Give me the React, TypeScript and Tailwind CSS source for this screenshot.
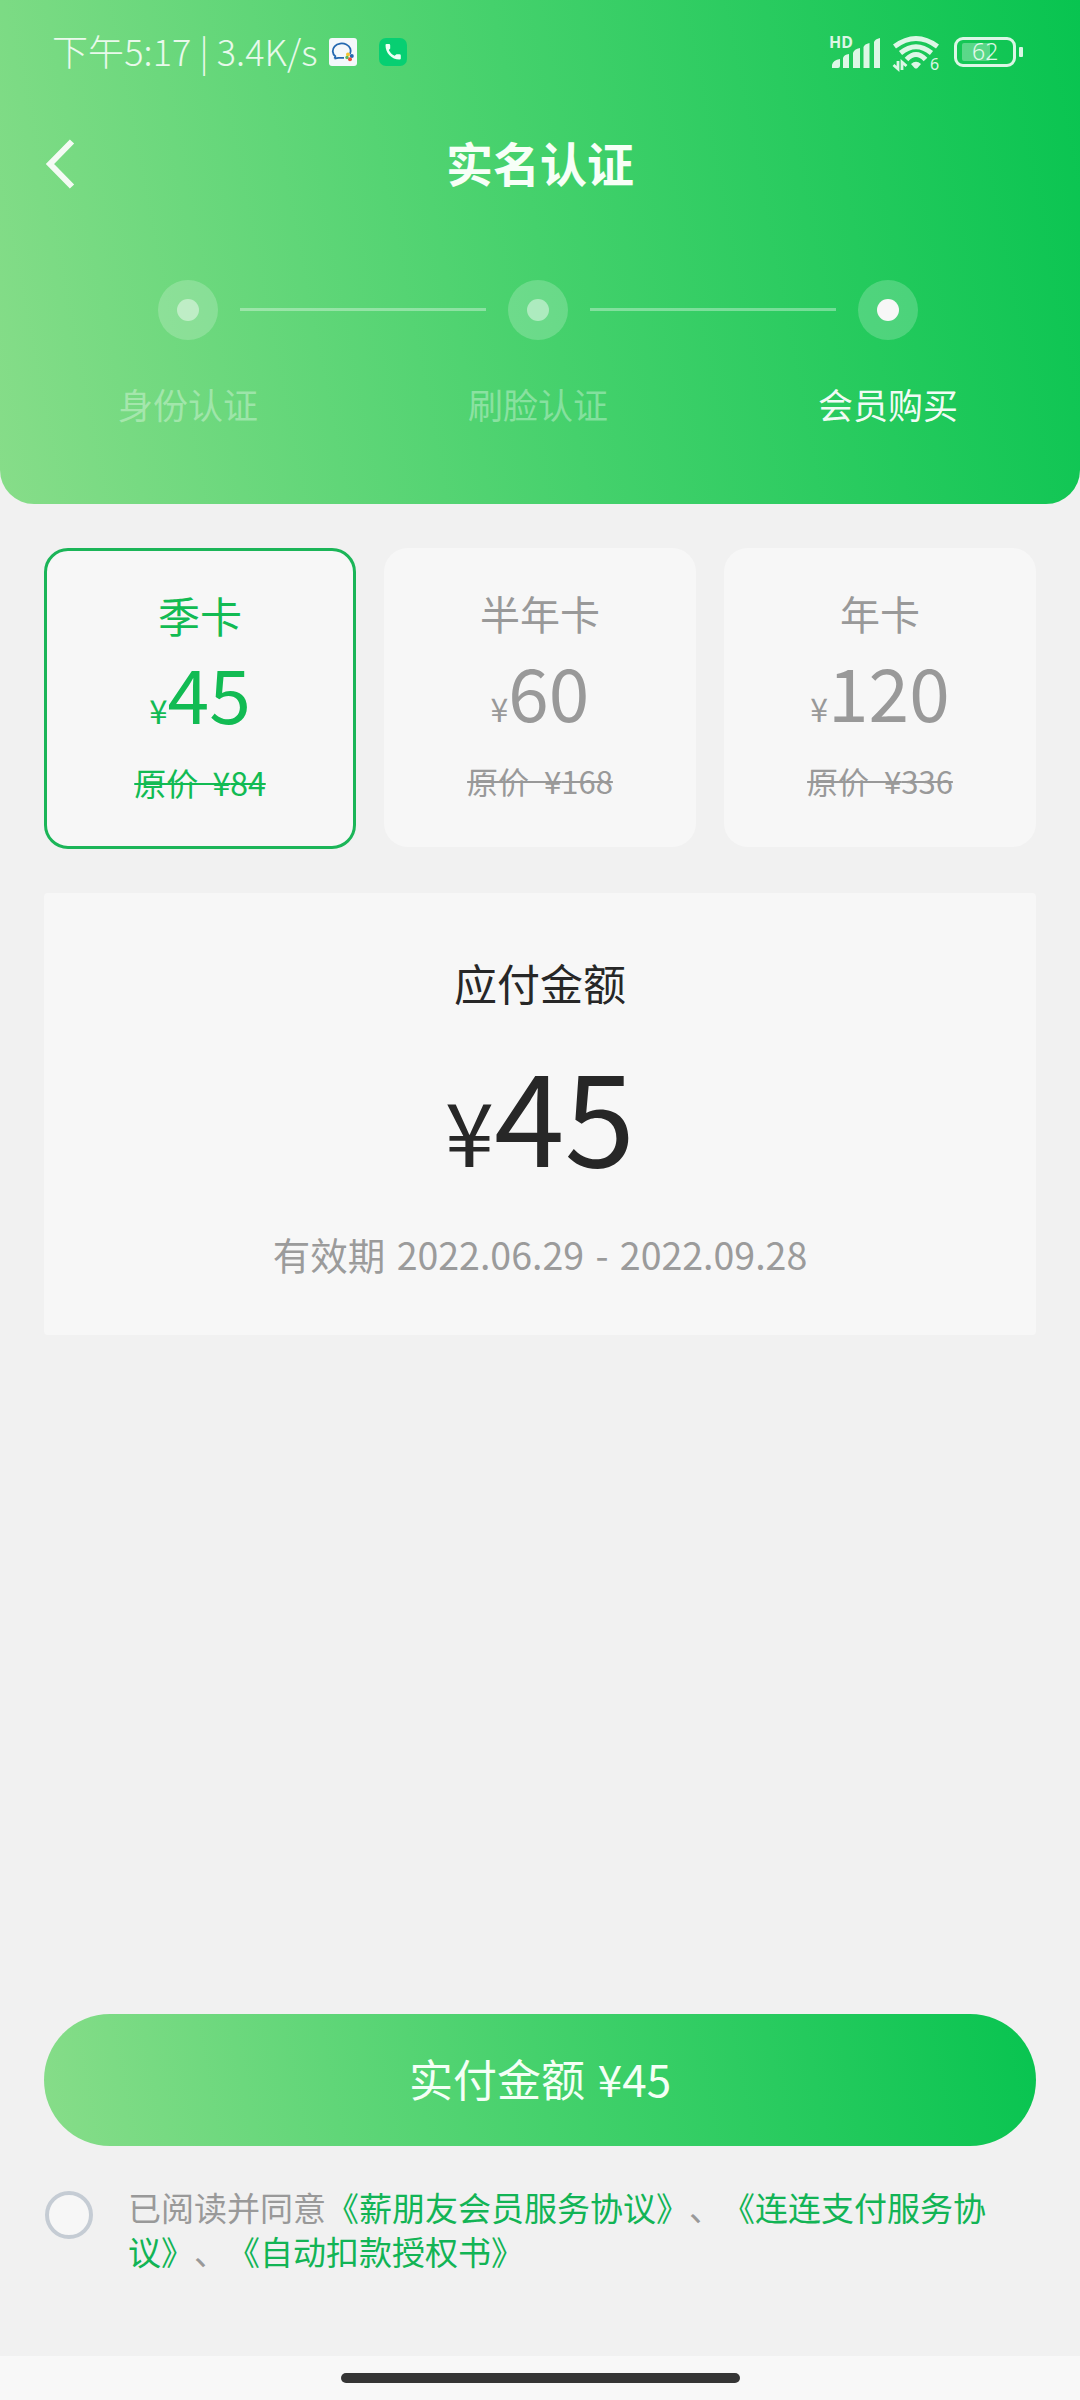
import React from "react";

const plans = [
  { name: "季卡", price: "45", original: "84", selected: true },
  { name: "半年卡", price: "60", original: "168", selected: false },
  { name: "年卡", price: "120", original: "336", selected: false },
];

const steps = [
  { label: "身份认证", active: false },
  { label: "刷脸认证", active: false },
  { label: "会员购买", active: true },
];

function StatusBar() {
  return (
    <div className="flex h-[104px] items-center pl-[52px] pr-[57px] text-white/85">
      <span className="-mt-[5px] w-[277px] whitespace-nowrap text-[36px] font-light leading-none tracking-[0.1px]">下午5:17 | 3.4K/s</span>
      <svg className="h-7 w-7" viewBox="0 0 28 28">
        <rect width="28" height="28" rx="3" fill="#f4f8fb" />
        <path d="M5.500 20.500L6.300 18.300A9 7.600 0 1 1 21 16M5.500 20.500L9.500 19.800H15" fill="none" stroke="#2468b0" strokeWidth="1.800" />
        <circle cx="19" cy="16.500" r="2" fill="#f5c332" />
        <circle cx="22.800" cy="18" r="2" fill="#2468b0" />
        <circle cx="18" cy="19.500" r="1.700" fill="#5cb85c" />
        <circle cx="21" cy="21.300" r="2" fill="#e8503a" />
      </svg>
      <svg className="ml-[22px] h-7 w-7" viewBox="0 0 28 28">
        <rect width="28" height="28" rx="7" fill="#07cf72" />
        <path d="M6.500 7Q6.500 6 7.500 6H10Q11.200 6 11.200 7.200V10.500L9.800 12C11 14.600 13 16.600 15.600 17.800L17.500 16.200H20.500Q21.800 16.200 21.800 17.500V20.500Q21.800 21.600 20.500 21.600C12.500 21.600 6.500 15 6.500 7Z" fill="#effff6" />
      </svg>
      <div className="grow" />
      <svg className="h-[40px] w-[52px] overflow-visible" viewBox="0 0 52 40" fill="#ffffff" fillOpacity="0.85">
        <text x="1" y="16" fontSize="16" fontWeight="700" fontFamily="Noto Sans">HD</text>
        <path d="M4 36V33Q5 28 12 27V34Q12 36 10 36ZM15 36V26Q16 22.500 21 22V36ZM25 36V21Q26 17 32 16V36ZM35.500 36V15Q36.500 12 41.500 11V36ZM46 36V10Q47 7 52 6V36Z" />
      </svg>
      <svg className="ml-3 h-[40px] w-[48px] overflow-visible" viewBox="0 0 48 40" fill="none" stroke="#ffffff" strokeOpacity="0.85" strokeWidth="5">
        <path d="M2.500 14.500Q24 -1.500 45.500 14.500M8.500 21Q24 8.500 39.500 21M14.500 27.500Q24 17.500 33.500 27.500" />
        <path d="M19 32Q24 27.500 29 32L25.500 36Q24 37 22.500 36Z" fill="#ffffff" fillOpacity="0.85" stroke="none" />
        <path d="M6 29V37L1.500 33M10 38V30L14.500 34" strokeWidth="2.800" />
        <text x="38" y="38" fontSize="16" fontFamily="Noto Sans" fill="#ffffff" fillOpacity="0.85" stroke="none">6</text>
      </svg>
      <div className="ml-[14px] flex h-[30px] w-[62px] items-center rounded-[9px] border-[3px] border-white/85 pl-[5px]">
        <div className="h-[18px] w-[28px] shrink-0 rounded-[2px] bg-white/30" />
        <span className="-ml-[18px] -mt-px font-['Noto_Sans'] text-[23px] font-light leading-none">62</span>
      </div>
      <div className="ml-[3px] h-[10px] w-[4px] rounded-[1px] bg-white/85" />
    </div>
  );
}

function Steps() {
  return (
    <div className="mt-[56px] flex px-[13px]">
      {steps.map((s, i) => (
        <div key={s.label} className="flex w-[350px] flex-col items-center">
          <div className="relative flex h-[60px] w-[60px] items-center justify-center rounded-full bg-white/20">
            <div className={s.active ? "h-[22px] w-[22px] rounded-full bg-[#f7f7f7]" : "h-[22px] w-[22px] rounded-full bg-white/45"} />
            {i < 2 && <div className="absolute left-[82px] top-[28px] h-[3px] w-[246px] bg-white/35" />}
          </div>
          <span className={s.active ? "mt-[46px] text-[35px] leading-[36px] text-white/95" : "mt-[46px] text-[35px] leading-[36px] text-white/35"}>{s.label}</span>
        </div>
      ))}
    </div>
  );
}

export default function App() {
  return (
    <div className="flex h-[2400px] w-[1080px] flex-col overflow-hidden bg-[#f1f1f1] font-['Noto_Sans_CJK_SC',sans-serif]">
      <header className="h-[504px] shrink-0 rounded-b-[34px] bg-[linear-gradient(79deg,#87dd89_0%,#45d16c_50%,#08c450_100%)]">
        <StatusBar />
        <div className="flex h-[120px] items-center justify-center">
          <svg className="ml-[44px] h-[52px] w-[34px]" viewBox="0 0 34 52" fill="none" stroke="#f4fbf4" strokeWidth="6">
            <path d="M28 3.500L6 26L28 48.500" />
          </svg>
          <h1 className="-mt-[6px] mr-[78px] grow text-center text-[47px] font-bold leading-none text-[#f7fff7]">实名认证</h1>
        </div>
        <Steps />
      </header>

      <section className="mt-[44px] flex gap-7 px-11">
        {plans.map((p) => (
          <div
            key={p.name}
            className={
              p.selected
                ? "flex h-[301px] w-[312px] flex-col items-center rounded-[24px] border-[3px] border-[#1bb558] bg-[#f7f7f7] pt-[43px] text-[#12bb53]"
                : "flex h-[299px] w-[312px] flex-col items-center rounded-[24px] bg-[#f7f7f7] pt-[44px] text-[#999999]"
            }
          >
            <span className={p.selected ? "text-[42px] leading-[42px]" : "text-[40px] leading-[42px]"}>{p.name}</span>
            <div className="mt-[20px] flex h-[72px] items-baseline leading-[72px]">
              <span className={p.selected ? "text-[33px]" : "text-[32px]"}>¥</span>
              <span className={p.selected ? "text-[75px]" : "text-[73px]"}>{p.price}</span>
            </div>
            <span className={p.selected ? "mt-[36px] text-[32px] leading-[36px] line-through decoration-[2px] [word-spacing:7px]" : "mt-[37px] text-[31px] leading-[36px] line-through decoration-[2px] [word-spacing:8px]"}>原价 ¥{p.original}</span>
          </div>
        ))}
      </section>

      <section className="mx-11 mt-11 flex h-[442px] shrink-0 flex-col items-center rounded-[4px] bg-[#f7f7f7] text-[#272727]">
        <h2 className="mt-[67px] text-[43px] leading-[44px]">应付金额</h2>
        <div className="mt-[43px] flex h-[130px] items-baseline leading-[130px]">
          <span className="text-[88px]">¥</span>
          <span className="text-[127px]">45</span>
        </div>
        <p className="mt-[57px] whitespace-nowrap text-[37.500px] leading-[40px] text-[#9b9b9b] [word-spacing:3px]">有效期 2022.06.29 - 2022.09.28</p>
      </section>

      <div className="grow" />

      <button className="mx-11 h-[132px] shrink-0 rounded-full bg-[linear-gradient(79deg,#87dd89_0%,#45d16c_50%,#08c450_100%)] pb-[5px] text-[44px] leading-none text-[#f4fff6] [word-spacing:3px]">
        实付金额 ¥45
      </button>
      <div className="mt-[40px] flex h-[170px] shrink-0 pl-[45px]">
        <div className="mt-[5px] h-12 w-12 shrink-0 rounded-full border-4 border-[#c5ccd4] bg-[#f7f7f7]" />
        <p className="-mt-px ml-[35px] w-[870px] text-[33px] leading-[44px] text-[#999999] [text-spacing-trim:space-all]">
          已阅读并同意<span className="text-[#12b455]">《薪朋友会员服务协议》</span>、<span className="text-[#12b455]">《连连支付服务协<br />议》</span>、<span className="text-[#12b455]">《自动扣款授权书》</span>
        </p>
      </div>
      <div className="flex h-[44px] shrink-0 justify-center bg-[#f8f8f8] pt-[17px]">
        <div className="h-[10px] w-[399px] rounded-full bg-[#353535]" />
      </div>
    </div>
  );
}
